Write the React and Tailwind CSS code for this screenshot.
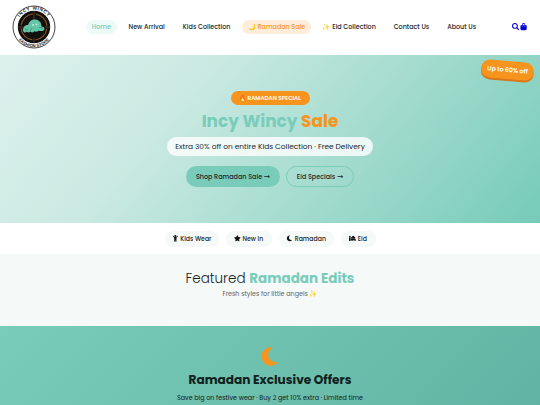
import React from 'react';
import { FaChild, FaSearch } from 'react-icons/fa';
import { FaBagShopping, FaMoon, FaMosque, FaStar } from 'react-icons/fa6';

const navItems = [
  { name: 'Home', style: 'w-[30.5px] bg-[#eefaf7] text-[#7accba]' },
  { name: 'New Arrival', style: 'w-[49px] text-[#212529]' },
  { name: 'Kids Collection', style: 'w-[59.5px] text-[#212529]' },
  { name: '🌙 Ramadan Sale', style: 'w-[69px] bg-[#feeddb] text-[#f7941d]' },
  { name: '✨ Eid Collection', style: 'w-[65px] text-[#212529]' },
  { name: 'Contact Us', style: 'w-[48px] text-[#212529]' },
  { name: 'About Us', style: 'w-[41px] text-[#212529]' }
];

const categories = [
  { name: 'Kids Wear', icon: FaChild, style: 'w-[54px]' },
  { name: 'New In', icon: FaStar, style: 'w-[46px]' },
  { name: 'Ramadan', icon: FaMoon, style: 'w-[55px]' },
  { name: 'Eid', icon: FaMosque, style: 'w-[35px]' }
];

const Logo = () => (
  <svg className="h-[44px] w-[44px]" viewBox="0 0 44 44">
    <defs>
      <path id="logo-top" d="M4.6 22a17.4 17.4 0 0 1 34.8 0" />
      <path id="logo-bottom" d="M1.8 22a20.2 20.2 0 0 0 40.4 0" />
    </defs>
    <circle cx="22" cy="22" r="21" fill="#fff" stroke="#151515" strokeWidth="0.8" />
    <circle cx="22" cy="22" r="16.2" fill="#11100e" />
    <circle cx="22" cy="22" r="13" fill="none" stroke="#875528" strokeWidth="1.1" strokeDasharray="17.4 3.02" strokeDashoffset="-1.5" />
    <path d="M22 6v10M6 22h5M33 22h5M22 33v5" stroke="#8a6040" strokeWidth="0.5" />
    <path d="M11 25c0-3 2-5 5-5 1-4 4-6 7.500-5.500 4.500.5 6 4 6 7 3 0 4 3 2 4-2 1-4 .5-5 0-1 1.500-3 1.500-4 .5-1 2-3 1.500-4 .5-1 1.500-3 1-3.500 0-2 2-4 1-4-1.500z" fill="#62c5a8" />
    <path d="M13 24l3 1M27 22l4 1.500M18 26l2-3" stroke="#2d7465" strokeWidth="0.6" />
    <circle cx="21" cy="20" r="0.9" fill="#c9ecdd" />
    <circle cx="24.500" cy="19.500" r="0.9" fill="#c9ecdd" />
    <g className="font-['Liberation_Sans'] font-bold" fontSize="4.6" fill="#222">
      <text textAnchor="middle" letterSpacing="0.6"><textPath href="#logo-top" startOffset="50%">INCY WINCY</textPath></text>
      <text textAnchor="middle" fontSize="4.3"><textPath href="#logo-bottom" startOffset="50%">FASHION STORE</textPath></text>
    </g>
  </svg>
);

const Arrow = () => <span className="font-['DejaVu_Sans'] text-[7.5px] leading-none font-normal">→</span>;

const App = () => {
  return (
    <div className="h-[405px] w-[540px] overflow-hidden bg-white font-[Poppins,'Liberation_Sans','Noto_Color_Emoji',sans-serif] text-[#212529]">
      {/* Header */}
      <header className="flex h-[55px] items-center pl-3 pb-[1px]">
        <Logo />
        <nav className="ml-[30px] flex gap-[5.7px] text-[6.4px] font-medium">
          {navItems.map((item) => (
            <a key={item.name} className={`flex h-[14.5px] shrink-0 items-center justify-center rounded-full whitespace-nowrap ${item.style}`}>
              {item.name}
            </a>
          ))}
        </nav>
        <div className="ml-auto flex gap-[1px] pr-[13px] text-[7.2px] text-[#0000d8]">
          <FaSearch />
          <FaBagShopping />
        </div>
      </header>

      {/* Hero */}
      <section className="relative flex h-[168px] flex-col items-center bg-[linear-gradient(130deg,#def1ed_0%,#c9e9e1_33%,#76cbb8_100%)] pt-[36px]">
        <div className="absolute top-[6px] right-[6.5px] flex h-[18px] w-[53px] rotate-[5deg] items-center justify-center rounded-full bg-[#f7941d] text-[6.2px] font-semibold whitespace-nowrap text-white shadow-[0_2px_0_#d9771a]">
          Up to 60% off
        </div>
        <div className="flex h-[14px] w-[79px] items-center justify-center rounded-full bg-[#f7941d] text-[5.7px] font-semibold whitespace-nowrap text-white">
          🔥 RAMADAN SPECIAL
        </div>
        <h1 className="mt-[4px] text-[16.9px] leading-[24px] font-bold whitespace-nowrap text-[#7accba]">
          Incy Wincy <span className="text-[#f7941d]">Sale</span>
        </h1>
        <p className="mt-[4px] flex h-[19px] w-[206px] items-center justify-center rounded-full bg-white/80 text-[7.43px] whitespace-nowrap">
          Extra 30% off on entire Kids Collection · Free Delivery
        </p>
        <div className="mt-[10px] flex gap-[6px] text-[6.45px] font-medium">
          <button className="h-[21px] w-[94px] rounded-full bg-[#7accba] whitespace-nowrap">Shop Ramadan Sale <Arrow /></button>
          <button className="h-[21px] w-[68px] rounded-full border border-[#7accba] whitespace-nowrap">Eid Specials <Arrow /></button>
        </div>
      </section>

      {/* Categories */}
      <section className="flex h-[31px] items-center justify-center gap-[7px]">
        {categories.map((category) => {
          const Icon = category.icon;
          return (
            <a key={category.name} className={`flex h-[16px] items-center justify-center gap-[2px] rounded-full bg-[#f5f9f8] text-[6.2px] font-medium whitespace-nowrap ${category.style}`}>
              <Icon className="text-[6.7px] text-[#111]" />
              {category.name}
            </a>
          );
        })}
      </section>

      {/* Featured */}
      <section className="h-[72px] bg-[#f5f9f8] pt-[15px] text-center">
        <h2 className="text-[13.5px] leading-[20px] font-light whitespace-nowrap">
          Featured <span className="font-bold text-[#7accba]">Ramadan Edits</span>
        </h2>
        <p className="text-[6.4px] leading-[10px] text-[#666]">Fresh styles for little angels ✨</p>
      </section>

      {/* Offers */}
      <section className="flex h-[106px] flex-col items-center bg-[linear-gradient(135deg,#7accba_0%,#60b3a2_100%)] pt-[20px] text-[#10201d]">
        <FaMoon className="mr-[2px] text-[21px] text-[#f7941d]" />
        <h2 className="mt-[4px] text-[12.15px] leading-[17px] font-bold whitespace-nowrap">Ramadan Exclusive Offers</h2>
        <p className="mt-[5px] text-[6.4px] leading-[10px] whitespace-nowrap">Save big on festive wear · Buy 2 get 10% extra · Limited time</p>
      </section>
    </div>
  );
};

export default App;
